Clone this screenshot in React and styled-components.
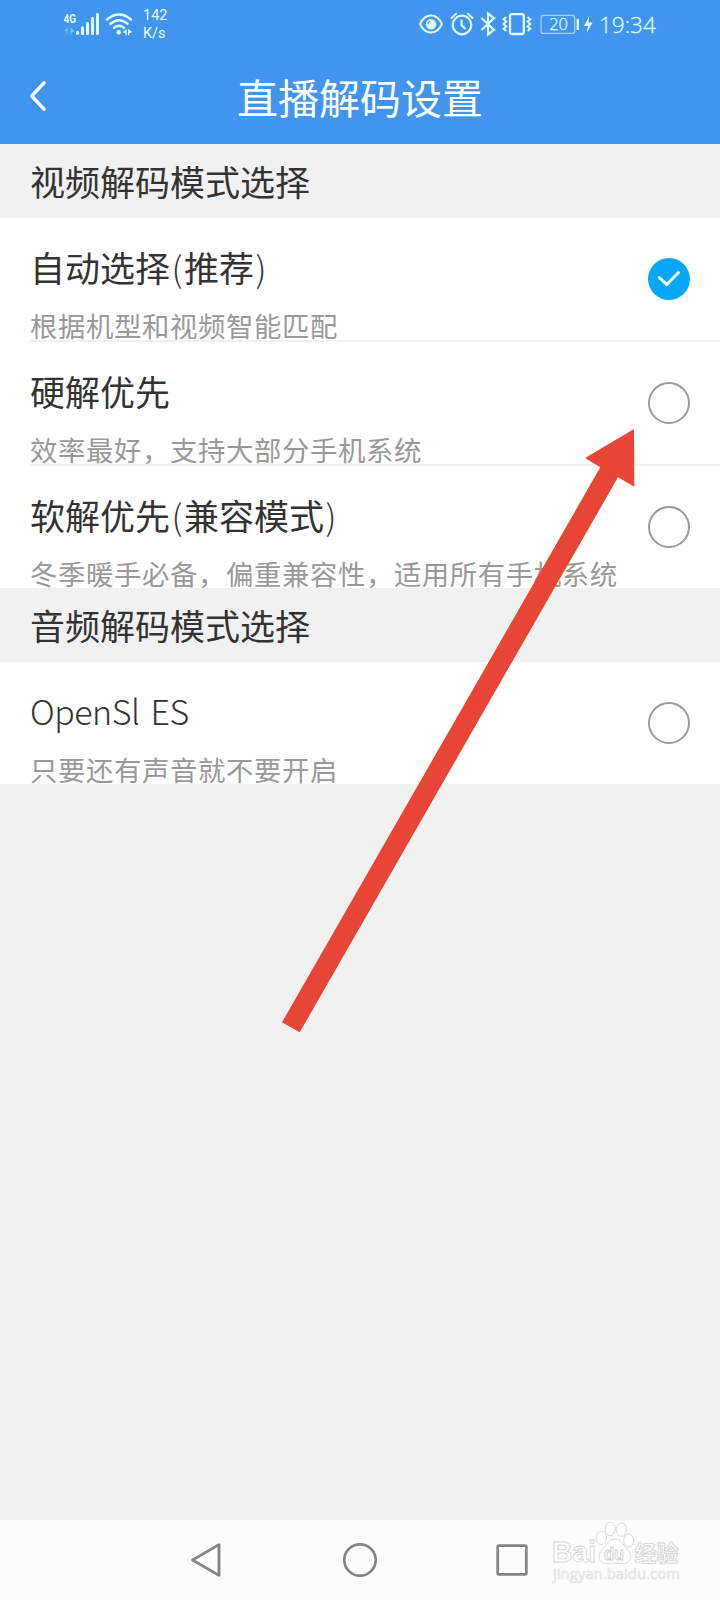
import React from "react";
import styled, { createGlobalStyle } from "styled-components";

const videoModes = [
	{ title: "自动选择(推荐)", desc: "根据机型和视频智能匹配", checked: true },
	{ title: "硬解优先", desc: "效率最好，支持大部分手机系统" },
	{ title: "软解优先(兼容模式)", desc: "冬季暖手必备，偏重兼容性，适用所有手机系统" },
];

const audioModes = [{ title: "OpenSl ES", desc: "只要还有声音就不要开启", latin: true }];

// brackets are drawn lighter than the characters around them
const withBrackets = (text) =>
	text.split(/([()])/).map((part, i) =>
		part === "(" || part === ")" ? <Bracket key={i}>{part}</Bracket> : part
	);

const ModeList = ({ modes }) => (
	<List>
		{modes.map((mode) => (
			<Row key={mode.title}>
				<Texts>
					<Title $latin={mode.latin}>{withBrackets(mode.title)}</Title>
					<Desc>{mode.desc}</Desc>
				</Texts>
				<Radio $checked={mode.checked}>
					{mode.checked && (
						<svg width="42" height="42" viewBox="0 0 42 42">
							<path d="M11.3 19.6 L18.7 26.4 L30.5 14.5" fill="none" stroke="#fff" strokeWidth="2.9" strokeLinecap="round" />
						</svg>
					)}
				</Radio>
			</Row>
		))}
	</List>
);

const SignalIcons = () => (
	<svg width="72" height="48" viewBox="0 0 72 48" fill="#e4fbff">
		<text x="-0.5" y="23" fontFamily="Roboto" fontSize="13" fontWeight="700" textLength="12.5" lengthAdjust="spacingAndGlyphs">4G</text>
		<g opacity="0.4">
			<path d="M0 31 L3.5 27.5 V34.5 H2.4 V31 Z M6.5 27.5 L10.5 31 L7.6 33 V34.5 H6.5 Z" />
		</g>
		<rect x="12" y="31" width="3" height="4" rx="1.4" />
		<rect x="17" y="26.5" width="3" height="8.5" rx="1.2" />
		<rect x="22" y="22" width="3" height="13" rx="1.2" />
		<rect x="27" y="17" width="3" height="18" rx="1.2" />
		<rect x="32" y="13" width="3" height="22" rx="1.2" />
		<g fill="none" stroke="#e4fbff" strokeWidth="2.4" strokeLinecap="round">
			<path d="M43 19.5 Q55 9.5 67 19.5" />
			<path d="M46.5 23.7 Q55 16.7 63.5 23.7" />
			<path d="M50 27.7 Q55 23.7 60 27.7" />
		</g>
		<circle cx="54.7" cy="32.2" r="2.3" />
		<path d="M58.8 32 L62.6 28.8 V35.2 H61.4 V33.2 Z M64 28.8 L68.2 32 L65.2 33.2 V35.2 H64 Z" />
	</svg>
);

const StateIcons = () => (
	<svg width="178" height="48" viewBox="0 0 178 48" fill="none" stroke="#dffaff" strokeWidth="2">
		<path d="M2 24 Q6 15.5 13 15.5 Q20 15.5 24 24 Q20 32.5 13 32.5 Q6 32.5 2 24 Z" />
		<circle cx="13" cy="24.3" r="5.3" fill="#dffaff" stroke="none" />
		<path d="M10 23.5 Q10.5 21.3 12.5 21" stroke="#4195ee" strokeWidth="1.2" />
		<g>
			<circle cx="44" cy="25" r="9.3" strokeWidth="2.2" />
			<path d="M43.5 19.5 V25 L47.5 29" strokeWidth="2.2" />
			<path d="M33.5 18 L38 13.8 M50 13.8 L54.5 18" strokeLinecap="round" />
		</g>
		<path d="M63.5 18 L76 30 L70 34.5 V13.5 L76 18 L63.5 30" strokeWidth="2.2" />
		<g>
			<rect x="92" y="14.2" width="13.8" height="19.8" rx="2" strokeWidth="2.3" />
			<path d="M88.3 17 L85.5 19.3 L88.3 21.6 L85.5 24 L88.3 26.4 L85.5 28.7 L88.3 31" />
			<path d="M109.5 17 L112.3 19.3 L109.5 21.6 L112.3 24 L109.5 26.4 L112.3 28.7 L109.5 31" />
		</g>
		<rect x="123.1" y="15.4" width="33.6" height="18" rx="2.5" stroke="#a5d4fb" strokeWidth="1.3" />
		<text x="131.2" y="30.4" fill="#dffaff" strokeWidth="0.3" fontFamily="Open Sans" fontWeight="300" fontSize="16.5">20</text>
		<rect x="158.6" y="19" width="2.3" height="11" fill="#dffaff" stroke="none" />
		<path d="M171.3 16 L166 26 H170 L168.5 33 L174.6 22.6 H170.5 Z" fill="#dffaff" stroke="none" />
	</svg>
);

const Watermark = () => (
	<Mark width="140" height="75" viewBox="0 0 140 75" fill="#fff" stroke="#d6d6d6" strokeWidth="0.9">
		<g fontFamily="Liberation Sans" fontWeight="700">
			<text x="2" y="42" fontSize="29" textLength="44" lengthAdjust="spacingAndGlyphs">Bai</text>
			<ellipse cx="51.3" cy="18" rx="5.2" ry="6.5" />
			<ellipse cx="60.3" cy="9" rx="5" ry="6.7" />
			<ellipse cx="71.5" cy="9.7" rx="5" ry="6.7" />
			<ellipse cx="78.7" cy="20.5" rx="5" ry="6.3" />
			<path d="M65 19 C71 19 73 25 77 29 C84 36 80 44 73 43.5 C68 43 61 43 57 43.5 C49 44 46 35 53 29 C57 25 59 19 65 19 Z" />
			<text x="54" y="40" fontSize="19" stroke="#cdcdcd" textLength="20" lengthAdjust="spacingAndGlyphs">du</text>
			<text x="84.5" y="41" fontSize="22" fontFamily="Noto Sans CJK SC">经验</text>
			<text x="3" y="59" fontSize="15" stroke="#e0e0e0" strokeWidth="0.7" fontFamily="Open Sans" fontWeight="400" textLength="127" lengthAdjust="spacingAndGlyphs">jingyan.baidu.com</text>
		</g>
	</Mark>
);

const App = () => {
	return (
		<Screen>
			<GlobalStyle />
			<Header>
				<StatusBar>
					<SignalIcons />
					<Speed>
						<span>142</span>
						<span>K/s</span>
					</Speed>
					<Spacer />
					<StateIcons />
					<Clock>19:34</Clock>
				</StatusBar>
				<TitleBar>
					<BackIcon width="48" height="48" viewBox="0 0 48 48">
						<path d="M30 10.8 L17.8 24 L30 37.2" fill="none" stroke="#fff" strokeWidth="3.4" strokeLinecap="round" strokeLinejoin="round" />
					</BackIcon>
					<PageTitle>直播解码设置</PageTitle>
				</TitleBar>
			</Header>
			<SectionTitle>视频解码模式选择</SectionTitle>
			<ModeList modes={videoModes} />
			<SectionTitle>音频解码模式选择</SectionTitle>
			<ModeList modes={audioModes} />
			<Spacer />
			<NavBar>
				<svg width="40" height="40" viewBox="0 0 40 40">
					<path d="M6.5 20 L33 4.6 V35.4 Z" fill="none" stroke="#858585" strokeWidth="2.8" strokeLinejoin="round" />
				</svg>
				<svg width="40" height="40" viewBox="0 0 40 40">
					<circle cx="21" cy="20" r="15.7" fill="none" stroke="#858585" strokeWidth="2.7" />
				</svg>
				<svg width="40" height="40" viewBox="0 0 40 40">
					<rect x="5.7" y="5.7" width="28.6" height="28.6" rx="1.3" fill="none" stroke="#858585" strokeWidth="2.8" />
				</svg>
			</NavBar>
			<Watermark />
			<Arrow width="360" height="610" viewBox="280 425 360 610">
				<path d="M634 429 L585 458 L600.3 467.3 L282 1022.3 L299.7 1032.3 L618 477.3 L634.3 486.7 Z" fill="#e94536" />
			</Arrow>
		</Screen>
	);
};

export default App;

const GlobalStyle = createGlobalStyle`
	body {
		margin: 0;
		font-family: "Noto Sans CJK SC", sans-serif;
	}

	svg {
		display: block;
		flex-shrink: 0;
	}
`;

const Screen = styled.div`
	position: relative;
	width: 720px;
	height: 1600px;
	display: flex;
	flex-direction: column;
	overflow: hidden;
	background-color: #f1f1f1;
`;

const Header = styled.div`
	height: 144px;
	flex-shrink: 0;
	background-color: #4195ee;
	color: white;
`;

const StatusBar = styled.div`
	height: 48px;
	display: flex;
	box-sizing: border-box;
	padding: 0 63px 0 64px;
`;

const Speed = styled.div`
	display: flex;
	flex-direction: column;
	padding-top: 7px;
	margin-left: 7px;
	color: #e4fbff;
	font-family: Roboto, sans-serif;
	font-size: 14.5px;
	line-height: 18px;
`;

const Spacer = styled.div`
	flex: 1;
`;

const Clock = styled.div`
	width: 58px;
	margin-left: 3px;
	color: #dffaff;
	font-family: "Open Sans", sans-serif;
	font-weight: 300;
	font-size: 22.5px;
	line-height: 50px;
	white-space: nowrap;
	-webkit-text-stroke: 0.3px #dffaff;
`;

const TitleBar = styled.div`
	height: 96px;
	display: flex;
	align-items: center;
	padding: 0 14px;
`;

const BackIcon = styled.svg`
	width: 48px;
	height: 48px;
`;

const PageTitle = styled.div`
	flex: 1;
	padding-right: 48px;
	text-align: center;
	font-size: 41px;
	line-height: 60px;
`;

const SectionTitle = styled.div`
	height: 74px;
	flex-shrink: 0;
	padding-left: 30px;
	color: #333;
	font-size: 35px;
	line-height: 74px;
`;

const List = styled.div`
	flex-shrink: 0;
	background-color: white;
`;

const Row = styled.div`
	height: 122px;
	display: flex;
	align-items: center;
	justify-content: space-between;
	padding-right: 30px;
	margin-left: 30px;

	&:not(:last-child) {
		border-bottom: 2px solid #f0f0f0;
	}
`;

const Texts = styled.div`
	height: 122px;
	box-sizing: border-box;
	padding-top: 29px;
	overflow: hidden;
`;

const Title = styled.div`
	color: #333;
	font-size: ${({ $latin }) => ($latin ? "34px" : "35px")};
	font-weight: ${({ $latin }) => ($latin ? 300 : 400)};
	letter-spacing: ${({ $latin }) => ($latin ? "-0.5px" : "0")};
	word-spacing: ${({ $latin }) => ($latin ? "4px" : "0")};
	line-height: 40px;
	white-space: nowrap;
`;

const Bracket = styled.span`
	display: inline-block;
	width: 14px;
	text-align: center;
	font-weight: 300;
`;

const Desc = styled.div`
	margin-top: 21px;
	color: #999;
	font-size: 27.4px;
	letter-spacing: 0.6px;
	line-height: 34px;
	white-space: nowrap;
`;

const Radio = styled.div`
	width: 42px;
	height: 42px;
	flex-shrink: 0;
	box-sizing: border-box;
	border-radius: 50%;
	border: ${({ $checked }) => ($checked ? "none" : "2px solid #999")};
	background-color: ${({ $checked }) => ($checked ? "#03a9f8" : "white")};
`;

const NavBar = styled.div`
	height: 80px;
	flex-shrink: 0;
	box-sizing: border-box;
	padding: 0 188px 0 186px;
	display: flex;
	align-items: center;
	justify-content: space-between;
	background-color: #fcfcfc;
`;

const Mark = styled.svg`
	position: absolute;
	left: 550px;
	top: 1520px;
`;

const Arrow = styled.svg`
	position: absolute;
	left: 280px;
	top: 425px;
`;
